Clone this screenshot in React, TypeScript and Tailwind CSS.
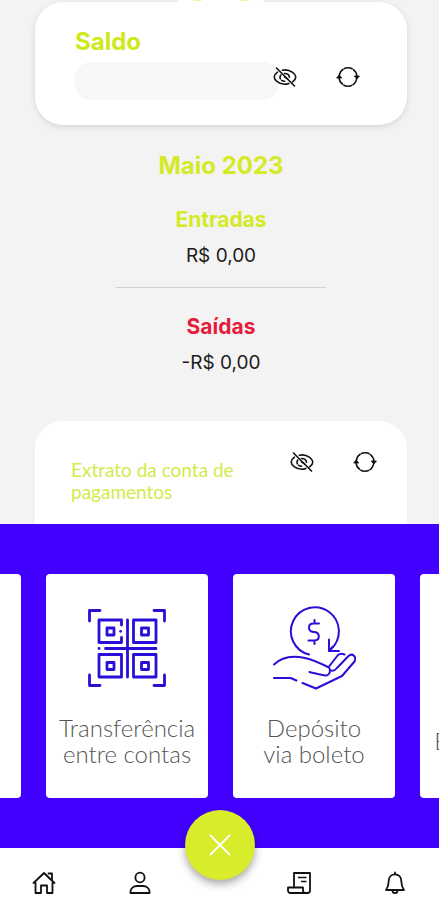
import type { ReactNode } from 'react';

function EyeOffIcon() {
  return (
    <svg viewBox="0 0 24 22" className="h-[22px] w-6" fill="none" stroke="#111" strokeWidth="1.6" strokeLinecap="round">
      <path d="M4.500 6.200C2.600 7.600 1.200 9.600 1.200 11c0 2.800 4.500 7.200 10.300 7.200 1.600 0 3-.3 4.300-.8" />
      <path d="M9.300 4.200c.9-.2 1.700-.3 2.600-.3 6 0 10.900 4.300 10.900 7.100 0 1.600-1.300 3.500-3.200 4.900" />
      <path d="M7.800 9c-.5.700-.8 1.400-.8 2.200 0 2.300 2 4.100 4.600 4.100" strokeDasharray="4 2" />
      <path d="M11.500 7.500c2.700-.2 4.900 1.500 4.900 3.700" />
      <path d="M11.500 10.800l3 2" />
      <path d="M3.500 2l18 18" />
    </svg>
  );
}

function RefreshIcon() {
  return (
    <svg viewBox="0 0 24 22" className="h-[22px] w-6" fill="none" stroke="#111" strokeWidth="1.600">
      <path d="M3.200 10.500C3.600 5.400 7.300 1.700 12 1.700c4.700 0 8.500 3.700 8.900 8.300" strokeDasharray="9 0.500" />
      <path d="M20.800 11.500c-.4 5.100-4.100 8.800-8.800 8.800-4.700 0-8.500-3.700-8.900-8.300" strokeDasharray="9 0.500" />
      <path d="M.6 12 3.200 9l2.600 3zM18.200 10l2.700 3 2.600-3z" fill="#111" strokeWidth="0.800" />
    </svg>
  );
}

function QrIcon() {
  return (
    <svg viewBox="0 0 78 78" className="size-[78px]" fill="none" stroke="#2a0fd8" strokeWidth="2.800" strokeLinecap="round" strokeLinejoin="round">
      <path d="M1.500 12V1.500H12M66 1.500h10.500V12M1.500 66v10.500H12M66 76.500h10.500V66" />
      <path d="M33.500 16v-5H11v22.500h22.500V28.500" />
      <path d="M45.500 11H68v22.500H45.500zM11 45.500h22.500V68H11zM45.500 45.500H68V68H45.500z" />
      <path d="M19 19h7v7h-7zM53.500 19h7v7h-7zM19 53.500h7v7h-7zM53.500 53.500h7v7h-7z" />
      <path d="M39.500 11v57M17.500 39.500H68" />
      <path d="M11 39.500h.1M32.500 22.300h.1" />
    </svg>
  );
}

function DepositIcon() {
  return (
    <svg viewBox="0 0 84 84" className="size-[84px]" fill="none" stroke="#2a0fd8" strokeWidth="2" strokeLinecap="round" strokeLinejoin="round">
      <path d="M37 48.500A24 24 0 1 1 59 43" />
      <path d="M57 33.500V45h10" />
      <path d="M57 45l4-4.500" />
      <path d="M47 17.500h-5.500c-6 0-6 8 0 8.500h1c6 .8 5.500 8.500 0 8.500h-6M42.500 14v3.500M42.500 35v3" />
      <path d="M2 58.500c8-8 18-9.500 31-6.500 9 2 16 5.500 24 9.500 2 3 1 7-2.500 8-3 .5-11-2-17-3.500" />
      <path d="M57 60.500 66 49c2.500-2.200 5-1.200 6.500-.5" />
      <path d="M59 64.500c2.500.5 4.500-.5 6-2.500l11.500-12c4-3.500 8.500 1 6 5.500L70 70 44 82.500 30.500 77" />
      <path d="M2 72h16.500l6 2.500" />
    </svg>
  );
}

function HomeIcon() {
  return (
    <svg viewBox="0 0 24 24" className="size-6" fill="none" stroke="#111" strokeWidth="1.800" strokeLinecap="round" strokeLinejoin="round">
      <path d="M1.500 12 12 2l10.500 10M16.500 2.500h3.500v6M3.500 11.500V22H9v-7.500h6V22h5.500V11.500" />
    </svg>
  );
}

function UserIcon() {
  return (
    <svg viewBox="0 0 24 24" className="size-6" fill="none" stroke="#111" strokeWidth="1.800" strokeLinejoin="round">
      <ellipse cx="12" cy="6.500" rx="4.600" ry="4.800" />
      <path d="M2.500 22v-1.500c0-3 3-5.500 6.500-5.500h6c3.500 0 6.500 2.500 6.500 5.500V22z" />
    </svg>
  );
}

function ReceiptIcon() {
  return (
    <svg viewBox="0 0 24 24" className="size-6" fill="none" stroke="#111" strokeWidth="1.800" strokeLinejoin="round">
      <path d="M7 16V2h16v17.500c0 1.500-1 2.500-2.500 2.500H3.500C2 22 1 21 1 19.500V16.500h15v3c0 1.500 1.200 2.500 2.500 2.500" />
      <path d="M11 6.500h8.500M14 10.500h5.500" strokeWidth="1.400" />
    </svg>
  );
}

function BellIcon() {
  return (
    <svg viewBox="0 0 24 24" className="size-6" fill="none" stroke="#111" strokeWidth="1.800" strokeLinecap="round" strokeLinejoin="round">
      <path d="M12 1.500v1.800M12 3.300c-4 0-6.300 3-6.300 6.700 0 5-1.200 6.800-2.700 9h18c-1.500-2.200-2.700-4-2.700-9 0-3.700-2.300-6.700-6.300-6.700zM9.500 19.500c0 3.500 5 3.500 5 0" />
    </svg>
  );
}

function BalanceActions() {
  return (
    <div className="flex gap-[39px]">
      <button type="button" aria-label="Ocultar valores">
        <EyeOffIcon />
      </button>
      <button type="button" aria-label="Atualizar">
        <RefreshIcon />
      </button>
    </div>
  );
}

function ActionCard({ icon, children }: { icon?: ReactNode; children?: ReactNode }) {
  return (
    <button
      type="button"
      className="flex h-56 w-[162px] shrink-0 flex-col items-center rounded bg-white pt-8 text-2xl leading-[26px] font-light text-[#555]"
    >
      <span className="flex h-[84px] items-center justify-center">{icon}</span>
      <span className="mt-[25px] flex h-[52px] items-center text-center">{children}</span>
    </button>
  );
}

function App() {
  return (
    <div className="flex min-h-screen flex-col overflow-hidden bg-[#f3f3f3] font-['Inter','Open_Sans',sans-serif]">
      <main className="flex flex-1 flex-col pr-8 pl-[35px]">
        <section className="relative mt-0.5 h-[123px] rounded-[28px] bg-white px-10 pt-6 shadow-[0_2px_6px_rgba(0,0,0,0.12)]">
          <div className="absolute -top-1 left-1/2 flex h-3 w-[87px] -translate-x-1/2 justify-between rounded-lg bg-white px-4 pt-0.5">
            <span className="h-px w-2 bg-[#eef6a6]" />
            <span className="h-px w-2 bg-[#eef6a6]" />
          </div>
          <h2 className="text-2xl leading-8 font-bold text-[#cfe81a]">Saldo</h2>
          <div className="mt-1 flex items-start">
            <div className="-mr-1.5 h-[38px] w-[204px] rounded-2xl bg-[#f7f7f7]" />
            <div className="relative pt-1">
              <BalanceActions />
            </div>
          </div>
        </section>

        <section className="flex flex-col items-center pt-[25px] text-center">
          <h1 className="text-2xl leading-8 font-bold text-[#d3ea25]">Maio 2023</h1>
          <h3 className="mt-6 text-[21px] leading-7 font-bold text-[#d3ea25]">Entradas</h3>
          <p className="mt-2 text-[19px] leading-7 text-[#1c1c1c]">R$ 0,00</p>
          <hr className="mt-[17px] w-[210px] border-[#d2d2d2]" />
          <h3 className="mt-[25px] text-[21px] leading-7 font-bold text-[#e51c3c]">Saídas</h3>
          <p className="mt-2 text-[19px] leading-7 text-[#1c1c1c]">-R$ 0,00</p>
        </section>

        <section className="mt-11 flex flex-1 items-start justify-between rounded-t-[28px] bg-white pt-[30px] pr-[30px] pl-9 font-['Lato','Open_Sans',sans-serif]">
          <h2 className="w-[180px] pt-2 text-[19px] leading-[22px] text-[#d3ea4a]">Extrato da conta de pagamentos</h2>
          <BalanceActions />
        </section>
      </main>

      <section className="h-[324px] overflow-hidden bg-[#4200ff] pt-[50px] font-['Lato','Open_Sans',sans-serif]">
        <div className="flex justify-center gap-[25px] pl-0.5">
          <ActionCard />
          <ActionCard icon={<QrIcon />}>
            Transferência
            <br />
            entre contas
          </ActionCard>
          <ActionCard icon={<DepositIcon />}>
            Depósito
            <br />
            via boleto
          </ActionCard>
          <ActionCard>Empréstimos</ActionCard>
        </div>
      </section>

      <nav className="relative flex h-[52px] items-start justify-between bg-white px-8 pt-[23px]">
        <div className="flex gap-[72px]">
          <a href="#inicio" aria-label="Início">
            <HomeIcon />
          </a>
          <a href="#perfil" aria-label="Perfil">
            <UserIcon />
          </a>
        </div>
        <div className="flex gap-[72px]">
          <a href="#extrato" aria-label="Extrato">
            <ReceiptIcon />
          </a>
          <a href="#avisos" aria-label="Notificações">
            <BellIcon />
          </a>
        </div>
        <button
          type="button"
          aria-label="Fechar"
          className="absolute -top-[38px] left-1/2 flex size-[70px] -translate-x-1/2 items-center justify-center rounded-full bg-[#d9ec2b] shadow-[0_4px_8px_rgba(0,0,0,0.35)]"
        >
          <svg viewBox="0 0 22 22" className="size-[22px]" stroke="#fff" strokeWidth="1.800" strokeLinecap="round">
            <path d="M1.500 1.500l19 19M20.500 1.500l-19 19" />
          </svg>
        </button>
      </nav>
    </div>
  );
}

export default App;
